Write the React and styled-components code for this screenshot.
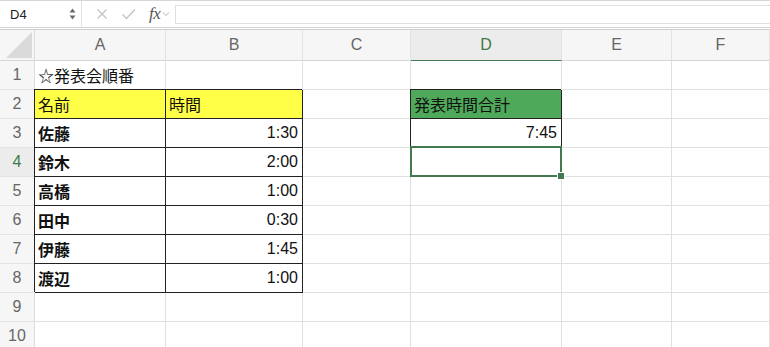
import React from 'react';
import styled, { createGlobalStyle } from 'styled-components';

const GlobalStyle = createGlobalStyle`
	html, body {
		margin: 0;
		padding: 0;
		background: #ffffff;
		overflow: hidden;
	}
	body {
		font-family: 'Liberation Sans', 'Noto Sans CJK JP', sans-serif;
	}
`;

const GRID = '#e0e0e0';
const INK = '#222222';
const SELECT = '#437a4f';

const COLS = ['A', 'B', 'C', 'D', 'E', 'F'];
const COL_WIDTHS = '35px 131px 137px 108px 151px 110px 1fr';

// row data: cells keyed by column letter
const rows = [
	{ A: { text: '☆発表会順番' } },
	{
		A: { text: '名前', fill: '#ffff47', boxed: true },
		B: { text: '時間', fill: '#ffff47', boxed: true },
		D: { text: '発表時間合計', fill: '#4fa95a', boxed: true },
	},
	{
		A: { text: '佐藤', bold: true, boxed: true },
		B: { text: '1:30', right: true, boxed: true },
		D: { text: '7:45', right: true, boxed: true },
	},
	{
		A: { text: '鈴木', bold: true, boxed: true },
		B: { text: '2:00', right: true, boxed: true },
		D: { selected: true },
	},
	{
		A: { text: '高橋', bold: true, boxed: true },
		B: { text: '1:00', right: true, boxed: true },
	},
	{
		A: { text: '田中', bold: true, boxed: true },
		B: { text: '0:30', right: true, boxed: true },
	},
	{
		A: { text: '伊藤', bold: true, boxed: true },
		B: { text: '1:45', right: true, boxed: true },
	},
	{
		A: { text: '渡辺', bold: true, boxed: true },
		B: { text: '1:00', right: true, boxed: true },
	},
	{},
	{},
];

function App() {
	return (
		<>
			<GlobalStyle />
			<Window>
				<FormulaBar>
					<NameBox>
						<span>D4</span>
						<Stepper>
							<svg width='7' height='12' viewBox='0 0 7 12'>
								<path d='M3.5 0.5 L6.5 4.5 L0.5 4.5 Z' fill='#6b6b6b' />
								<path d='M3.5 11.5 L6.5 7.5 L0.5 7.5 Z' fill='#6b6b6b' />
							</svg>
						</Stepper>
					</NameBox>
					<BarIcons>
						<svg width='14' height='14' viewBox='0 0 14 14'>
							<path d='M2.5 2.5 L11.5 11.5 M11.5 2.5 L2.5 11.5' stroke='#c4c4c4' strokeWidth='1.4' />
						</svg>
						<svg width='16' height='14' viewBox='0 0 16 14'>
							<path d='M1.5 7.5 L5.5 11.5 L14 2.5' stroke='#c4c4c4' strokeWidth='1.4' fill='none' />
						</svg>
						<Fx>fx</Fx>
						<svg width='8' height='6' viewBox='0 0 8 6'>
							<path d='M1 1.5 L4 4.5 L7 1.5' stroke='#b0b0b0' strokeWidth='1' fill='none' />
						</svg>
					</BarIcons>
					<FormulaInput />
				</FormulaBar>
				<Sheet>
					<Corner>
						<svg width='26' height='26' viewBox='0 0 26 26'>
							<path d='M26 0 L26 26 L0 26 Z' fill='#dadada' />
						</svg>
					</Corner>
					{COLS.map((c) => (
						<ColHeader key={c} $active={c === 'D'}>
							{c}
						</ColHeader>
					))}
					{rows.map((row, i) => (
						<React.Fragment key={i}>
							<RowHeader $active={i === 3}>{i + 1}</RowHeader>
							{COLS.map((c) => {
								const cell = row[c] || {};
								return (
									<Cell
										key={c}
										$fill={cell.fill}
										$boxed={cell.boxed}
										$bold={cell.bold}
										$right={cell.right}
									>
										{cell.text}
										{cell.selected && (
											<Selection>
												<Handle />
											</Selection>
										)}
									</Cell>
								);
							})}
						</React.Fragment>
					))}
				</Sheet>
			</Window>
		</>
	);
}

const Window = styled.div`
	width: 770px;
	height: 347px;
	overflow: hidden;
	display: flex;
	flex-direction: column;
	background: #fff;
`;

const FormulaBar = styled.div`
	height: 28px;
	flex-shrink: 0;
	display: flex;
	align-items: center;
	border-top: 1px solid #d6d6d6;
	border-bottom: 1px solid #d4d4d4;
	margin-bottom: 1px;
	box-sizing: border-box;
`;

const NameBox = styled.div`
	width: 82px;
	height: 100%;
	display: flex;
	align-items: center;
	justify-content: space-between;
	padding: 0 5px 0 10px;
	box-sizing: border-box;
	border-right: 1px solid #e2e2e2;
	font-size: 13px;
	color: #222;
`;

const Stepper = styled.div`
	display: flex;
	align-items: center;
`;

const BarIcons = styled.div`
	display: flex;
	align-items: center;
	gap: 12px;
	padding-left: 13px;
	width: 93px;
	box-sizing: border-box;
`;

const Fx = styled.span`
	font-family: 'Liberation Serif', serif;
	font-style: italic;
	font-size: 17px;
	color: #555;
	margin-right: -10px;
	letter-spacing: -0.5px;
`;

const FormulaInput = styled.div`
	flex: 1;
	height: 19px;
	border: 1px solid #e0e0e0;
	border-right: none;
	box-sizing: border-box;
`;

const Sheet = styled.div`
	display: grid;
	grid-template-columns: ${COL_WIDTHS};
	grid-template-rows: 31px repeat(10, 29px);
	border-top: 1px solid #cfcfcf;
`;

const Corner = styled.div`
	background: #f6f6f6;
	border-right: 1px solid #dcdcdc;
	border-bottom: 1px solid #d6d6d6;
	display: flex;
	align-items: flex-end;
	justify-content: flex-end;
	padding: 0 2px 2px 0;
	box-sizing: border-box;
`;

const ColHeader = styled.div`
	background: ${(p) => (p.$active ? '#ececec' : '#f6f6f6')};
	border-right: 1px solid #e2e2e2;
	border-bottom: 1px solid ${(p) => (p.$active ? SELECT : '#d6d6d6')};
	display: flex;
	align-items: center;
	justify-content: center;
	font-size: 16px;
	font-weight: 300;
	color: ${(p) => (p.$active ? '#3d7a4a' : '#666')};
	box-sizing: border-box;
`;

const RowHeader = styled.div`
	background: ${(p) => (p.$active ? '#ececec' : '#f6f6f6')};
	border-right: 1px solid ${(p) => (p.$active ? SELECT : '#dcdcdc')};
	border-bottom: 1px solid #e2e2e2;
	display: flex;
	align-items: center;
	justify-content: center;
	font-size: 16px;
	font-weight: 300;
	color: ${(p) => (p.$active ? '#3d7a4a' : '#666')};
	box-sizing: border-box;
`;

const Cell = styled.div`
	position: relative;
	background: ${(p) => p.$fill || '#fff'};
	border-right: 1px solid ${(p) => (p.$boxed ? INK : GRID)};
	border-bottom: 1px solid ${(p) => (p.$boxed ? INK : GRID)};
	box-shadow: ${(p) => (p.$boxed ? `-1px -1px 0 ${INK}` : 'none')};
	display: flex;
	align-items: center;
	justify-content: ${(p) => (p.$right ? 'flex-end' : 'flex-start')};
	padding: 0 4px 0 3px;
	box-sizing: border-box;
	font-family: 'Liberation Sans', 'Noto Sans CJK JP', sans-serif;
	font-size: 16px;
	font-weight: ${(p) => (p.$bold ? 700 : 400)};
	color: #111;
	white-space: nowrap;
`;

const Selection = styled.div`
	position: absolute;
	z-index: 2;
	left: -1px;
	top: -2px;
	right: -1px;
	bottom: -1px;
	border: 2px solid ${SELECT};
	pointer-events: none;
`;

const Handle = styled.div`
	position: absolute;
	right: -5px;
	bottom: -5px;
	width: 6px;
	height: 6px;
	background: ${SELECT};
	border: 1px solid #fff;
`;

export default App;
